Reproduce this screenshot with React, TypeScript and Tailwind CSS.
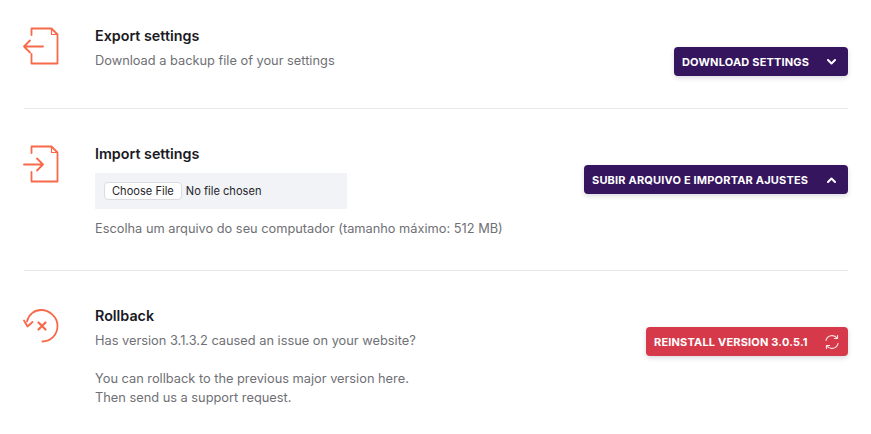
import React from "react";

const ICON = "#f8694a";

function FileOutline() {
  return (
    <>
      <path d="M9.500 12V5.500H29.500L35.500 11.500V40.500H9.500V31" />
      <path d="M29.500 5.500V11.500H35.500" strokeWidth="1.200" />
    </>
  );
}

function ExportIcon() {
  return (
    <svg width="38" height="46" viewBox="0 0 38 46" fill="none" stroke={ICON} strokeWidth="1.800" strokeLinecap="round" strokeLinejoin="round">
      <FileOutline />
      <path d="M21 23.500H2M8 17.500l-6 6 6 6" />
    </svg>
  );
}

function ImportIcon() {
  return (
    <svg width="38" height="46" viewBox="0 0 38 46" fill="none" stroke={ICON} strokeWidth="1.800" strokeLinecap="round" strokeLinejoin="round">
      <FileOutline />
      <path d="M2 23.500H21M15 17.500l6 6-6 6" />
    </svg>
  );
}

function RollbackIcon() {
  return (
    <svg width="38" height="38" viewBox="0 0 38 38" fill="none" stroke={ICON} strokeWidth="1.800" strokeLinecap="round" strokeLinejoin="round">
      <path d="M5 16.500C6.500 9.500 12.500 5 19 5C27.500 5 35.500 12 35.500 21C35.500 30 28.500 36.500 20.500 36.500" />
      <path d="M2 15.500L5.500 21.500L10.500 17" />
      <path d="M16.500 17.500L23.500 24.500M23.500 17.500L16.500 24.500" strokeWidth="2.200" />
    </svg>
  );
}

function Chevron({ up }: { up?: boolean }) {
  return (
    <svg className="mr-1" width="9" height="6" viewBox="0 0 9 6" fill="none" stroke="#fff" strokeWidth="2" strokeLinecap="round" strokeLinejoin="round">
      <path d={up ? "M1 5l3.500-3.500L8 5" : "M1 1l3.500 3.500L8 1"} />
    </svg>
  );
}

function Refresh() {
  return (
    <svg width="16" height="16" viewBox="0 0 16 16" fill="none" stroke="#fff" strokeWidth="1.200" strokeLinecap="round" strokeLinejoin="round" opacity="0.85">
      <path d="M2 6.500A6.200 6.200 0 0 1 13 4" />
      <path d="M14 9.500A6.200 6.200 0 0 1 3 12" />
      <path d="M13.500 1.500V4.500H10.500M2.500 14.500V11.500H5.500" />
    </svg>
  );
}

function Btn({ label, icon, className }: { label: string; icon: React.ReactNode; className: string }) {
  return (
    <button className={`flex h-[29px] items-center justify-between rounded-[4px] px-2 text-[11px] font-bold tracking-[0.18px] text-white shadow-[0_2px_5px_rgba(30,30,70,0.16)] ${className}`}>
      <span className="pt-[1px]">{label}</span>
      {icon}
    </button>
  );
}

export default function App() {
  return (
    <div className="h-[434px] w-[871px] overflow-hidden bg-white font-['Inter',sans-serif] text-[12.800px] text-[#6f7075]">
      <div className="mr-[23px] ml-6 flex h-[109px] border-b border-[#e8e8ea]">
        <div className="-ml-[2px] w-[73px] shrink-0 pt-[23px]"><ExportIcon /></div>
        <div className="flex-1 pt-[27px]">
          <h2 className="text-[14.300px] leading-[18px] font-semibold text-[#1a1a24]">Export settings</h2>
          <p className="mt-[7px] leading-[18px]">Download a backup file of your settings</p>
        </div>
        <div className="pt-[47px]">
          <Btn label="DOWNLOAD SETTINGS" icon={<Chevron />} className="w-[174px] bg-[#35155d]" />
        </div>
      </div>
      <div className="mr-[23px] ml-6 flex h-[162px] border-b border-[#e8e8ea]">
        <div className="-ml-[2px] w-[73px] shrink-0 pt-[32px]"><ImportIcon /></div>
        <div className="flex-1 pt-[36px]">
          <h2 className="text-[14.300px] leading-[18px] font-semibold text-[#1a1a24]">Import settings</h2>
          <div className="mt-[10px] flex h-[36px] w-[252px] items-center bg-[#f1f3f7] px-[9px] text-[11.100px] text-[#26262b]">
            <span className="rounded-[4px] border border-[#dcdce0] bg-white px-[7px] leading-[16px]">Choose File</span>
            <span className="ml-[4px]">No file chosen</span>
          </div>
          <p className="mt-[11px] leading-[18px]">Escolha um arquivo do seu computador (tamanho máximo: 512 MB)</p>
        </div>
        <div className="pt-[56px]">
          <Btn label="SUBIR ARQUIVO E IMPORTAR AJUSTES" icon={<Chevron up />} className="w-[264px] bg-[#35155d]" />
        </div>
      </div>
      <div className="mr-[23px] ml-6 flex">
        <div className="-ml-[2px] w-[73px] shrink-0 pt-[34px]"><RollbackIcon /></div>
        <div className="flex-1 pt-[36px]">
          <h2 className="text-[14.300px] leading-[18px] font-semibold text-[#1a1a24]">Rollback</h2>
          <p className="mt-[7px] leading-[18px]">Has version 3.1.3.2 caused an issue on your website?</p>
          <p className="mt-[19px] leading-[19px]">You can rollback to the previous major version here.<br />Then send us a support request.</p>
        </div>
        <div className="pt-[56px]">
          <Btn label="REINSTALL VERSION 3.0.5.1" icon={<Refresh />} className="w-[202px] bg-[#d63a4a]" />
        </div>
      </div>
    </div>
  );
}
